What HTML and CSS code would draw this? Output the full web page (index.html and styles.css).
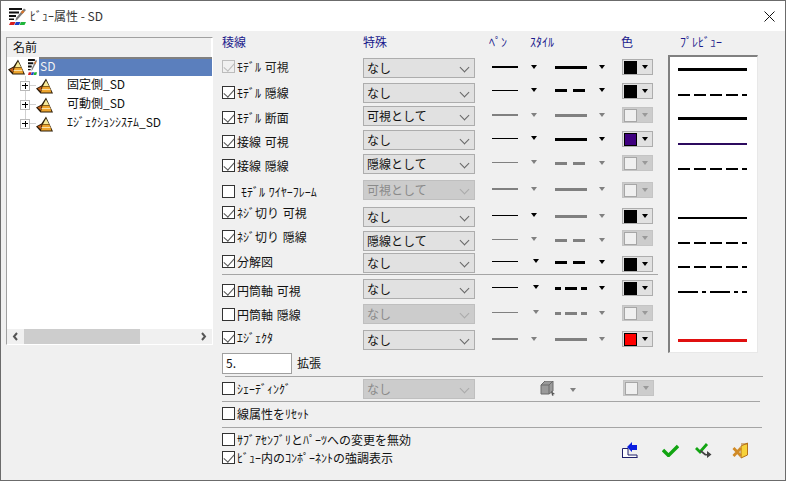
FILE: index.html
```html
<!DOCTYPE html>
<html lang="ja">
<head>
<meta charset="utf-8">
<title>ﾋﾞｭｰ属性 - SD</title>
<link rel="stylesheet" href="styles.css">
</head>
<body>
<svg class="defs" width="0" height="0" aria-hidden="true">
  <symbol id="pyr" viewBox="0 0 17 16">
    <path d="M10 0.5 L17 15.5 H4.5 L0 10.5 L5.5 7.5 Z" fill="#2a1c08"/>
    <path d="M10 2.5 L13 8 H7 Z" fill="#f6ea9a"/>
    <path d="M6.6 8.5 H13.4 L15.5 14.5 H5 Z" fill="#eea52e"/>
    <path d="M1.6 10.6 L5.6 8.6 L4.8 13.4 Z" fill="#c8621c"/>
    <path d="M5.6 11 H14.4 V12 H5.6 Z" fill="#f9dfa8"/>
  </symbol>
  <symbol id="tool" viewBox="0 0 17 17" preserveAspectRatio="none">
    <path d="M0 0H13V2H0ZM0 3.5H10V5.5H0ZM0 7H7V9H0ZM0 10.5H5V12H0Z" fill="#111"/>
    <path d="M15 0.5 L17 2 L8.5 11.5 L6.5 13 L7 10 Z" fill="#7c7c7c"/>
    <path d="M13.6 2.2 L15.5 3.7 L13.6 5.8 L11.7 4.3 Z" fill="#d9752a"/>
    <path d="M1.5 14H6.5L5 17H0Z" fill="#d81e1e"/>
    <path d="M7 14H11.5L10 17H5.5Z" fill="#1c3fc8"/>
    <path d="M12 14H17L15.5 17H10.5Z" fill="#1fb53a"/>
  </symbol>
</svg>
<div class="window">
  <header class="titlebar">
    <svg class="title-icon"><use href="#tool"/></svg>
    <span class="title-text">ﾋﾞｭｰ属性 - SD</span>
    <svg class="close" viewBox="0 0 11 11"><path d="M.5.5L10.5 10.5M10.5.5L.5 10.5" stroke="#111" stroke-width="1" fill="none"/></svg>
  </header>
  <main class="content">
    <section class="tree">
      <div class="tree-head">名前</div>
      <div class="root">
        <svg class="pyr"><use href="#pyr"/></svg>
        <svg class="root-tool"><use href="#tool"/></svg>
        <span class="root-label">SD</span>
      </div>
      <div class="node"><span class="exp"></span><svg class="pyr"><use href="#pyr"/></svg><span class="node-label">固定側_SD</span></div>
      <div class="node"><span class="exp"></span><svg class="pyr"><use href="#pyr"/></svg><span class="node-label">可動側_SD</span></div>
      <div class="node last"><span class="exp"></span><svg class="pyr"><use href="#pyr"/></svg><span class="node-label">ｴｼﾞｪｸｼｮﾝｼｽﾃﾑ_SD</span></div>
      <div class="scrollbar">
        <svg class="sb-arrow" viewBox="0 0 17 15"><path d="M10 4L7 7.5L10 11" fill="none" stroke="#555" stroke-width="2"/></svg>
        <span class="sb-thumb"></span>
        <svg class="sb-arrow sb-end" viewBox="0 0 17 15"><path d="M7 4L10 7.5L7 11" fill="none" stroke="#555" stroke-width="2"/></svg>
      </div>
    </section>

    <section class="props">
      <div class="upper">
        <div class="table">
          <div class="heads">
            <span class="h-edge">稜線</span><span class="h-spec">特殊</span><span class="h-pen">ﾍﾟﾝ</span><span class="h-style">ｽﾀｲﾙ</span><span>色</span>
          </div>

          <div class="row r1">
            <label class="lab off"><i class="chk on"></i>ﾓﾃﾞﾙ 可視</label><div class="sel">なし</div><span></span>
            <div class="pen"><i class="ln w2"></i></div><div class="pa"><i class="arr"></i></div>
            <div class="sty"><i class="ln w3"></i></div><div class="sa"><i class="arr"></i></div>
            <div class="color"><i class="sw black"></i><i class="arr"></i></div>
          </div>
          <div class="row r2">
            <label class="lab"><i class="chk on"></i>ﾓﾃﾞﾙ 隠線</label><div class="sel">なし</div><span></span>
            <div class="pen"><i class="ln w1"></i></div><div class="pa"><i class="arr"></i></div>
            <div class="sty"><i class="ln w3 dash"></i></div><div class="sa"><i class="arr"></i></div>
            <div class="color"><i class="sw black"></i><i class="arr"></i></div>
          </div>
          <div class="row r3">
            <label class="lab"><i class="chk on"></i>ﾓﾃﾞﾙ 断面</label><div class="sel">可視として</div><span></span>
            <div class="pen dim"><i class="ln w2"></i></div><div class="pa dim"><i class="arr"></i></div>
            <div class="sty dim"><i class="ln w3"></i></div><div class="sa dim"><i class="arr"></i></div>
            <div class="color dis"><i class="sw"></i><i class="arr"></i></div>
          </div>
          <div class="row r4">
            <label class="lab"><i class="chk on"></i>接線 可視</label><div class="sel">なし</div><span></span>
            <div class="pen"><i class="ln w1"></i></div><div class="pa"><i class="arr"></i></div>
            <div class="sty"><i class="ln w3"></i></div><div class="sa"><i class="arr"></i></div>
            <div class="color"><i class="sw purple"></i><i class="arr"></i></div>
          </div>
          <div class="row r5">
            <label class="lab"><i class="chk on"></i>接線 隠線</label><div class="sel">隠線として</div><span></span>
            <div class="pen dim"><i class="ln w1"></i></div><div class="pa dim"><i class="arr"></i></div>
            <div class="sty dim"><i class="ln w3 dash"></i></div><div class="sa dim"><i class="arr"></i></div>
            <div class="color dis"><i class="sw"></i><i class="arr"></i></div>
          </div>
          <div class="row r6">
            <label class="lab wire"><i class="chk"></i>ﾓﾃﾞﾙ ﾜｲﾔｰﾌﾚｰﾑ</label><div class="sel dis">可視として</div><span></span>
            <div class="pen dim"><i class="ln w2"></i></div><div class="pa dim"><i class="arr"></i></div>
            <div class="sty dim"><i class="ln w3"></i></div><div class="sa dim"><i class="arr"></i></div>
            <div class="color dis"><i class="sw"></i><i class="arr"></i></div>
          </div>
          <div class="row r7">
            <label class="lab"><i class="chk on"></i>ﾈｼﾞ切り 可視</label><div class="sel">なし</div><span></span>
            <div class="pen"><i class="ln w1"></i></div><div class="pa"><i class="arr"></i></div>
            <div class="sty dim"><i class="ln w3"></i></div><div class="sa dim"><i class="arr"></i></div>
            <div class="color"><i class="sw black"></i><i class="arr"></i></div>
          </div>
          <div class="row r8">
            <label class="lab"><i class="chk on"></i>ﾈｼﾞ切り 隠線</label><div class="sel">隠線として</div><span></span>
            <div class="pen dim"><i class="ln w1"></i></div><div class="pa dim"><i class="arr"></i></div>
            <div class="sty dim"><i class="ln w3 dash"></i></div><div class="sa dim"><i class="arr"></i></div>
            <div class="color dis"><i class="sw"></i><i class="arr"></i></div>
          </div>
          <div class="row r9">
            <label class="lab"><i class="chk on"></i>分解図</label><div class="sel">なし</div><span></span>
            <div class="pen"><i class="ln w1"></i></div><div class="pa"><i class="arr"></i></div>
            <div class="sty"><i class="ln w3 dash"></i></div><div class="sa"><i class="arr"></i></div>
            <div class="color"><i class="sw black"></i><i class="arr"></i></div>
          </div>
          <div class="sep"></div>
          <div class="row r10">
            <label class="lab"><i class="chk on"></i>円筒軸 可視</label><div class="sel">なし</div><span></span>
            <div class="pen"><i class="ln w1"></i></div><div class="pa"><i class="arr"></i></div>
            <div class="sty"><i class="ln w3 dashdot"></i></div><div class="sa"><i class="arr"></i></div>
            <div class="color"><i class="sw black"></i><i class="arr"></i></div>
          </div>
          <div class="row r11">
            <label class="lab"><i class="chk"></i>円筒軸 隠線</label><div class="sel dis">なし</div><span></span>
            <div class="pen dim"><i class="ln w1"></i></div><div class="pa dim"><i class="arr"></i></div>
            <div class="sty dim"><i class="ln w3 dashdot"></i></div><div class="sa dim"><i class="arr"></i></div>
            <div class="color dis"><i class="sw"></i><i class="arr"></i></div>
          </div>
          <div class="row r12">
            <label class="lab"><i class="chk on"></i>ｴｼﾞｪｸﾀ</label><div class="sel">なし</div><span></span>
            <div class="pen dim"><i class="ln w2"></i></div><div class="pa dim"><i class="arr"></i></div>
            <div class="sty dim"><i class="ln w3"></i></div><div class="sa dim"><i class="arr"></i></div>
            <div class="color"><i class="sw red"></i><i class="arr"></i></div>
          </div>
        </div>

        <div class="preview-col">
          <div class="preview-head">ﾌﾟﾚﾋﾞｭｰ</div>
          <svg class="preview" viewBox="0 0 87 295">
            <g fill="none" stroke="#000">
              <path d="M8 12.5H77" stroke-width="3"/>
              <path d="M8 38H77" stroke-width="2" stroke-dasharray="12 4"/>
              <path d="M8 61.5H77" stroke-width="3"/>
              <path d="M8 87H77" stroke-width="2" stroke="#2c0a5e"/>
              <path d="M8 112H77" stroke-width="2" stroke-dasharray="12 4"/>
              <path d="M8 161H77" stroke-width="2"/>
              <path d="M8 186H77" stroke-width="2" stroke-dasharray="12 4"/>
              <path d="M8 210H77" stroke-width="2" stroke-dasharray="12 4"/>
              <path d="M8 235H77" stroke-width="2" stroke-dasharray="20 4 4 4"/>
              <path d="M8 283.5H77" stroke-width="3" stroke="#e01010"/>
            </g>
          </svg>
        </div>
      </div>

      <div class="scale-row"><div class="scale-input">5.</div><span>拡張</span></div>
      <div class="rule rule-a"></div>
      <div class="shade-row">
        <label class="lab"><i class="chk"></i>ｼｪｰﾃﾞｨﾝｸﾞ</label><div class="sel dis">なし</div>
        <svg class="cube" viewBox="0 0 16 15">
          <path d="M1 4L5 0H13V10L9 13H1Z" fill="#9a9a9a" stroke="#6a6a6a"/>
          <path d="M1 4H9V13M9 4L13 0" fill="none" stroke="#6a6a6a"/>
          <path d="M11 10L15 13L13 13.5L13.5 15L12 14.5Z" fill="#555"/>
        </svg>
        <div class="shade-arrow dim"><i class="arr"></i></div>
        <div class="color dis"><i class="sw"></i><i class="arr"></i></div>
      </div>
      <div class="rule rule-b"></div>
      <div class="reset-row"><label class="lab"><i class="chk"></i>線属性をﾘｾｯﾄ</label></div>
      <div class="rule rule-c"></div>
      <div class="footer">
        <div class="opts">
          <label class="lab"><i class="chk"></i>ｻﾌﾞｱｾﾝﾌﾞﾘとﾊﾟｰﾂへの変更を無効</label>
          <label class="lab"><i class="chk on"></i>ﾋﾞｭｰ内のｺﾝﾎﾟｰﾈﾝﾄの強調表示</label>
        </div>
        <div class="actions">
          <svg class="act a1" viewBox="0 0 17 16">
            <path d="M1.5 6.5H7V13H16V15.5H1.5Z" fill="#fff" stroke="#20206a"/>
            <path d="M1 15H16.5V16H1Z" fill="#20206a"/>
            <path d="M6 5L11 0V3H16V8H11V10Z" fill="#0a1ee0"/>
          </svg>
          <svg class="act a2" viewBox="0 0 17 13"><path d="M1 6L6.5 11.5L16 2" fill="none" stroke="#12a512" stroke-width="3.4"/></svg>
          <svg class="act a3" viewBox="0 0 17 15">
            <path d="M1 5L5 9L12 1" fill="none" stroke="#12a512" stroke-width="2.8"/>
            <path d="M6 7L11 11H12V8L16.5 11.5L12 15V12.6H10L5 8.5Z" fill="#444"/>
          </svg>
          <svg class="act a4" viewBox="0 0 17 17">
            <path d="M9 4L15.5 1V13L9 16Z" fill="#f7d23a" stroke="#b5711a"/>
            <path d="M9 2H15.5" stroke="#b5711a"/>
            <path d="M1.5 6L9 14M9 6L1.5 14" stroke="#d08a26" stroke-width="2.8"/>
          </svg>
        </div>
      </div>
    </section>
  </main>
</div>
</body>
</html>
```
FILE: styles.css
```css
* { box-sizing: border-box; }
html, body { margin: 0; padding: 0; }
body {
  width: 786px;
  height: 481px;
  overflow: hidden;
  font: 12px/14px "Noto Sans CJK JP", "Noto Sans", sans-serif;
  color: #111;
  background: #f0f0f0;
}
i { display: block; font-style: normal; }
.defs { position: absolute; }

.window {
  width: 786px;
  height: 481px;
  border: 1px solid #6b6b6b;
  display: flex;
  flex-direction: column;
}
.titlebar {
  height: 30px;
  flex: none;
  background: #fff;
  display: flex;
  align-items: center;
  padding-left: 8px;
  padding-right: 10px;
}
.title-icon { width: 17px; height: 17px; }
.title-text { margin-left: 4px; color: #333; }
.close { width: 11px; height: 11px; margin-left: auto; }

.content { flex: 1; display: flex; min-height: 0; padding-left: 5px; }

/* tree */
.tree {
  width: 207px;
  height: 308px;
  margin-top: 6px;
  background: #fff;
  border: 1px solid #fff;
  border-top-color: #a0a0a0;
  border-left-color: #a0a0a0;
  display: flex;
  flex-direction: column;
  flex: none;
}
.tree-head {
  height: 19px;
  flex: none;
  background: #f0f0f0;
  padding: 2px 0 0 6px;
  border-right: 1px solid #fff;
}
.root { height: 19px; flex: none; display: flex; align-items: center; }
.root .pyr { margin: 1px 0 0 1px; }
.root-tool { width: 9px; height: 16px; margin-left: 3px; flex: none; }
.root-label {
  flex: 1;
  height: 19px;
  margin-left: 2px;
  background: #5b7fbd;
  border-top: 2px solid #808080;
  color: #f2f2f2;
  padding-left: 1px;
  line-height: 13px;
}
.pyr { width: 17px; height: 16px; flex: none; }
.node {
  height: 19px;
  flex: none;
  display: flex;
  align-items: center;
  position: relative;
  padding-left: 13px;
}
.node::before {
  content: "";
  position: absolute;
  left: 18px;
  top: 0;
  bottom: 0;
  border-left: 1px solid #d0d0d0;
}
.node.last::before { bottom: 9px; }
.exp {
  position: relative;
  width: 10px;
  height: 10px;
  border: 1px solid #b8b8b8;
  background:
    linear-gradient(#000, #000) center / 6px 1px no-repeat,
    linear-gradient(#000, #000) center / 1px 6px no-repeat,
    #fff;
  flex: none;
  margin-right: 6px;
}
.exp::after {
  content: "";
  position: absolute;
  left: 9px;
  top: 3px;
  width: 6px;
  border-top: 1px solid #d0d0d0;
}
.node-label { margin-left: 14px; padding-bottom: 4px; }
.scrollbar {
  margin-top: auto;
  height: 15px;
  flex: none;
  display: flex;
  background: #f0f0f0;
}
.sb-arrow { width: 17px; height: 15px; flex: none; }
.sb-thumb { width: 116px; background: #cdcdcd; }
.sb-end { margin-left: auto; }

/* property side */
.props { margin-left: 9px; margin-top: 4px; width: 545px; flex: none; }
.upper { display: flex; height: 318px; }
.table { width: 436px; flex: none; }
.heads { height: 23px; display: flex; color: #1a1a8c; line-height: 14px; padding-top: 0; }
.h-edge { width: 141px; }
.h-spec { width: 126px; }
.h-pen { width: 41px; }
.h-style { width: 91px; }

.row {
  display: grid;
  grid-template-columns: 141px 112px 17px 26px 37px 32px 35px 31px;
  align-items: start;
}
.lab { display: flex; align-items: center; height: 13px; white-space: nowrap; word-spacing: 1px; }
.row .lab { margin-top: var(--chk); }
.chk {
  width: 13px;
  height: 13px;
  border: 1px solid #333;
  background: #fff;
  flex: none;
  margin-right: 2px;
  position: relative;
}
.chk.on::after {
  content: "";
  position: absolute;
  left: 3px;
  top: 0;
  width: 5px;
  height: 9px;
  border: solid #555;
  border-width: 0 1.4px 1.4px 0;
  transform: rotate(42deg);
}
.off { color: #222; }
.off .chk { border-color: #bcbcbc; background: #f0f0f0; }
.off .chk::after { border-color: #bcbcbc; }
.wire .chk { margin-right: 6px; }

.sel {
  height: 20px;
  background: #e1e1e1;
  border: 1px solid #adadad;
  padding-left: 3px;
  line-height: 17px;
  position: relative;
}
.sel::after {
  content: "";
  position: absolute;
  right: 6px;
  top: 5px;
  width: 6px;
  height: 6px;
  border: solid #666;
  border-width: 0 1px 1px 0;
  transform: rotate(45deg);
}
.sel.dis { background: #ccc; border-color: #bfbfbf; color: #8a8a8a; }
.sel.dis::after { border-color: #aaa; }

.pen, .pa { margin-top: var(--pen); height: 2px; display: flex; align-items: center; color: #000; }
.sty, .sa { margin-top: var(--sty); height: 2px; display: flex; align-items: center; color: #000; }
.dim { color: #808080; }
.pen.dim, .pa.dim, .sty.dim, .sa.dim { color: #808080; }
.ln { width: 100%; background: currentColor; flex: none; }
.w1 { height: 1px; }
.w2 { height: 2px; }
.w3 { height: 3px; }
.dash {
  background: linear-gradient(90deg, currentColor 0 12px, transparent 12px 18px, currentColor 18px 30px, transparent 30px);
}
.dashdot {
  background: linear-gradient(90deg, currentColor 0 6px, transparent 6px 10px, currentColor 10px 22px, transparent 22px 26px, currentColor 26px 32px);
}
.arr {
  width: 0;
  height: 0;
  border-left: 3px solid transparent;
  border-right: 3px solid transparent;
  border-top: 4px solid currentColor;
  flex: none;
}
.pa .arr { margin-left: var(--arr, 13px); }
.sa .arr { margin-left: 12px; }

.color {
  width: 31px;
  height: 16px;
  margin-top: var(--col, 0);
  background: #e1e1e1;
  border: 1px solid #adadad;
  display: flex;
  align-items: center;
  color: #000;
}
.sw { width: 13px; height: 13px; border: 1px solid #000; margin-left: 1px; margin-right: 5px; flex: none; }
.black { background: #000; }
.purple { background: #3f007f; }
.red { background: #f00; }
.color.dis { background: #ccc; border-color: #c4c4c4; color: #999; }
.color.dis .sw { background: #f0f0f0; border-color: #a6a6a6; }

.r1  { height: 25px; --chk: 2px;  --pen: 8px; --sty: 8px; --col: 1px; }
.r2  { height: 23px; --chk: 3px;  --pen: 6px; --sty: 6px; --col: 0px; }
.r3  { height: 24px; --chk: 5px;  --pen: 8px; --sty: 8px; --col: 1px; }
.r4  { height: 24px; --chk: 5px;  --pen: 7px; --sty: 8px; --col: 1px; }
.r5  { height: 26px; --chk: 5px;  --pen: 7px; --sty: 8px; --col: 1px; }
.r6  { height: 27px; --chk: 5px;  --pen: 8px; --sty: 8px; --col: 2px; }
.r7  { height: 24px; --chk: -1px; --pen: 7px; --sty: 8px; --col: 1px; }
.r8  { height: 22px; --chk: -1px; --pen: 7px; --sty: 8px; --col: -1px; }
.r9  { height: 21px; --chk: 2px;  --pen: 7px; --sty: 8px; --col: 3px; --arr: 15px; }
.r10 { height: 25px; --chk: 5px;  --pen: 7px; --sty: 8px; --col: 1px; --arr: 15px; }
.r11 { height: 26px; --chk: 4px;  --pen: 7px; --sty: 8px; --col: 1px; --arr: 15px; }
.r12 { height: 23px; --chk: 1px;  --pen: 8px; --sty: 8px; --col: 1px; }
.sep { height: 5px; border-top: 1px solid #a5a5a5; width: 436px; }

.preview-col { margin-left: 10px; width: 90px; flex: none; }
.preview-head { height: 20px; padding-left: 12px; color: #1a1a8c; }
.preview {
  display: block;
  width: 90px;
  height: 298px;
  background: #fff;
  border-top: 2px solid #808080;
  border-left: 2px solid #808080;
  border-right: 1px solid #e8e8e8;
  border-bottom: 1px solid #e8e8e8;
}

.scale-row { height: 23px; display: flex; gap: 5px; }
.scale-input {
  width: 70px;
  height: 21px;
  background: #fff;
  border: 1px solid #a0a0a0;
  padding: 2px 0 0 3px;
}
.scale-row span { line-height: 20px; }
.rule { border-top: 1px solid #a5a5a5; height: 0; }
.rule-a { margin-left: 3px; width: 538px; }
.rule-b { width: 538px; }
.rule-c { width: 540px; }
.shade-row { height: 24px; display: flex; align-items: flex-start; }
.shade-row .lab { width: 141px; margin-top: 5px; }
.shade-row .sel { width: 112px; margin-top: 2px; }
.cube { width: 16px; height: 15px; margin: 4px 0 0 65px; flex: none; }
.shade-arrow { margin: 11px 0 0 14px; color: #808080; width: 53px; }
.shade-row .color { margin-top: 3px; }
.reset-row { height: 25px; padding-top: 5px; }
.footer { display: flex; align-items: flex-start; }
.opts { width: 399px; flex: none; padding-top: 5px; display: flex; flex-direction: column; gap: 5px; }
.actions { display: flex; align-items: flex-start; padding-top: 14px; }
.act { flex: none; }
.a1 { width: 17px; height: 16px; }
.a2 { width: 17px; height: 13px; margin: 2px 0 0 24px; }
.a3 { width: 17px; height: 15px; margin: 1px 0 0 16px; }
.a4 { width: 17px; height: 17px; margin-left: 20px; }
```
